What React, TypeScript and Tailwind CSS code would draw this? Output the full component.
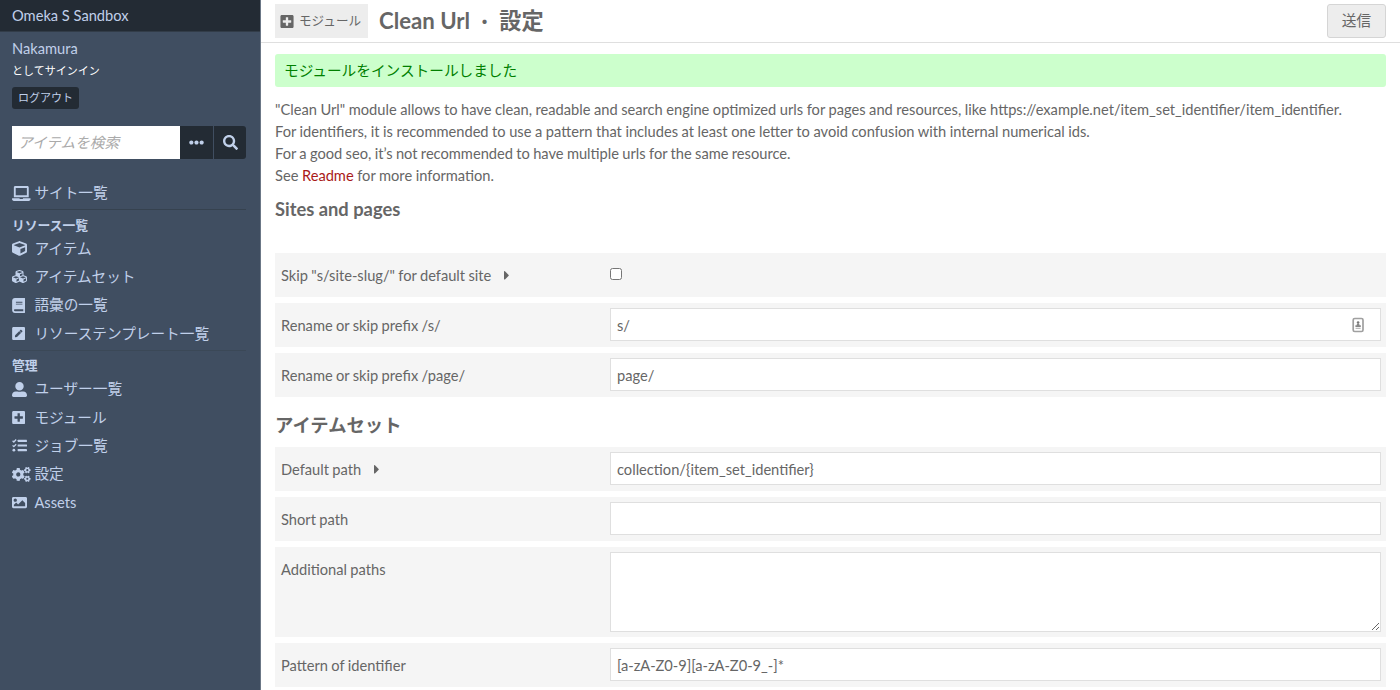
import React from 'react';
import {
  FaBook,
  FaCaretRight,
  FaCogs,
  FaCube,
  FaCubes,
  FaEllipsisH,
  FaImage,
  FaLaptop,
  FaPenSquare,
  FaPlusSquare,
  FaSearch,
  FaUserAlt,
} from 'react-icons/fa';

type NavItem = { label: string; icon: React.ComponentType<{ className?: string }>; size: string };

// checklist with heavier bars than the stock icon
const TasksIcon: React.FC<{ className?: string }> = ({ className }) => (
  <svg className={className} viewBox="0 0 512 512" fill="currentColor">
    <rect x="192" y="60" width="320" height="76" rx="16" />
    <rect x="192" y="218" width="320" height="76" rx="16" />
    <rect x="192" y="376" width="320" height="76" rx="16" />
    <circle cx="64" cy="416" r="48" />
    <path
      d="M20 92l42 42 80-82M20 252l42 42 80-82"
      fill="none"
      stroke="currentColor"
      strokeWidth="46"
      strokeLinejoin="round"
    />
  </svg>
);

const resourceLinks: NavItem[] = [
  { label: 'アイテム', icon: FaCube, size: 'w-[15px]' },
  { label: 'アイテムセット', icon: FaCubes, size: 'w-[15px]' },
  { label: '語彙の一覧', icon: FaBook, size: 'w-[13.4px]' },
  { label: 'リソーステンプレート一覧', icon: FaPenSquare, size: 'w-[13.4px]' },
];

const adminLinks: NavItem[] = [
  { label: 'ユーザー一覧', icon: FaUserAlt, size: 'w-[15px]' },
  { label: 'モジュール', icon: FaPlusSquare, size: 'w-[13.4px]' },
  { label: 'ジョブ一覧', icon: TasksIcon, size: 'w-[15px]' },
  { label: '設定', icon: FaCogs, size: 'w-[18.6px]' },
  { label: 'Assets', icon: FaImage, size: 'w-[15px]' },
];

const NavLink: React.FC<{ item: NavItem }> = ({ item }) => {
  const Icon = item.icon;
  return (
    <li>
      <a href="#" className="flex h-[28.4px] items-center whitespace-nowrap">
        <span className="w-[22.4px] shrink-0">
          <Icon className={`h-[15px] ${item.size}`} />
        </span>
        {item.label}
      </a>
    </li>
  );
};

const Sidebar: React.FC = () => (
  <aside className="w-[261px] shrink-0 border-r border-[#6b7786] bg-[#404e61] text-[#c0d0ea]">
    <div className="h-8 border-b border-[#323c48] bg-[#232b34] pl-3 leading-8">Omeka S Sandbox</div>
    <div className="pt-[6px] pr-[14px] pl-3">
      <div className="leading-[22px]">Nakamura</div>
      <div className="text-[11px] leading-[22px] text-white">としてサインイン</div>
      <button className="mt-[5px] block h-[22px] w-[67px] rounded-[3px] bg-[#232b34] text-[11px] leading-[22px]">
        ログアウト
      </button>
      <form className="mt-[17px] flex h-[33px]">
        <input
          placeholder="アイテムを検索"
          className="w-[168px] bg-white px-[6px] outline-none placeholder:text-[#aaa] placeholder:italic"
        />
        <button type="button" className="flex w-[33px] items-center justify-center bg-[#232b34]">
          <FaEllipsisH className="text-[15px]" />
        </button>
        <button
          type="button"
          className="flex w-[33px] items-center justify-center rounded-r-[3px] border-l border-[#404e61] bg-[#232b34]"
        >
          <FaSearch className="text-[15px]" />
        </button>
      </form>
      <ul className="mt-5 border-b border-[#36424f] pb-[2px]">
        <NavLink item={{ label: 'サイト一覧', icon: FaLaptop, size: 'w-[18.6px]' }} />
      </ul>
      <h4 className="mt-1 h-5 text-[12.8px] leading-[22px] font-bold">リソース一覧</h4>
      <ul className="border-b border-[#3b4857] pb-[2px]">
        {resourceLinks.map((item) => (
          <NavLink key={item.label} item={item} />
        ))}
      </ul>
      <h4 className="mt-[3px] h-[21px] text-[12.8px] leading-[22px] font-bold">管理</h4>
      <ul>
        {adminLinks.map((item) => (
          <NavLink key={item.label} item={item} />
        ))}
      </ul>
    </div>
  </aside>
);

const inputClass = 'h-[33px] w-full border border-[#dfdfdf] bg-white px-[6px] pt-px outline-none';

type FieldProps = { label: string; help?: boolean; children: React.ReactNode };

const Field: React.FC<FieldProps> = ({ label, help, children }) => (
  <div className="mb-[6px] flex bg-[#f5f5f5] p-[5px] pb-[6px] pl-[6px]">
    <div className="flex h-[33px] w-[329px] shrink-0 items-center pt-[2px] [word-spacing:-0.4px]">
      {label}
      {help && <FaCaretRight className="ml-[13px] h-[14.67px] w-[5.5px]" />}
    </div>
    <div className="relative min-w-0 flex-1">{children}</div>
  </div>
);

const App: React.FC = () => {
  return (
    <div className="flex h-[690px] overflow-hidden bg-white font-[Lato,'Noto_Sans_CJK_JP',sans-serif] text-[14.67px] text-[#666]">
      <Sidebar />
      <main className="min-w-0 flex-1">
        <header className="flex h-[43px] border-b border-[#dfdfdf] pt-1 pr-[14px] pl-[14px]">
          <div className="flex h-[34px] w-[93px] items-center bg-[#ededed] pl-[5px] text-[12.6px]">
            <FaPlusSquare className="mr-[5px] h-[15px] w-[14px]" />
            モジュール
          </div>
          <h1 className="ml-[11px] text-[22.2px] leading-[34px] font-bold whitespace-pre">
            Clean Url<span className="px-[11.5px]">·</span>設定
          </h1>
          <button className="ml-auto h-[34px] w-[59px] rounded-[3px] border border-[#d5d5d5] bg-[#ededed]">
            送信
          </button>
        </header>
        <div className="px-[14px] pt-[11px]">
          <div className="h-[33px] rounded-[3px] bg-[#cfc] pl-[9px] leading-[33px] text-[#008000]">
            モジュールをインストールしました
          </div>
          <p className="mt-3 leading-[22px] whitespace-nowrap [word-spacing:-0.21px]">
            "Clean Url" module allows to have clean, readable and search engine optimized urls for pages and
            resources, like https://example.net/item_set_identifier/item_identifier.
            <br />
            For identifiers, it is recommended to use a pattern that includes at least one letter to avoid
            confusion with internal numerical ids.
            <br />
            <span className="[word-spacing:-0.42px]">
              For a good seo, it’s not recommended to have multiple urls for the same resource.
            </span>
            <br />
            See{' '}
            <a href="#" className="text-[#a91919]">
              Readme
            </a>{' '}
            for more information.
          </p>
          <h3 className="mt-[11px] h-[55px] text-[18.33px] leading-[22px] font-bold">Sites and pages</h3>
          <Field label={'Skip "s/site-slug/" for default site'} help>
            <input
              type="checkbox"
              className="mt-[10px] block size-3 appearance-none rounded-[2.5px] border border-[#767676] bg-white"
            />
          </Field>
          <Field label="Rename or skip prefix /s/">
            <input className={inputClass} defaultValue="s/" />
            <svg className="absolute top-[9px] right-[16px]" width="13" height="16" viewBox="0 0 13 16">
              <rect x="1.2" y="1.5" width="9.8" height="13" rx="1.5" fill="#fff" stroke="#a0a0a0" strokeWidth="1.7" />
              <circle cx="6.1" cy="5.6" r="1.3" fill="#777" />
              <path d="M4.8 7h2.6v1.3h1.4v1.6H3.4V8.3h1.4z" fill="#888" />
              <path d="M3.6 11.3h5" stroke="#aaa" />
            </svg>
          </Field>
          <Field label="Rename or skip prefix /page/">
            <input className={inputClass} defaultValue="page/" />
          </Field>
          <h3 className="mt-[17px] mb-[11px] h-[22px] text-[18.33px] leading-[22px] font-bold">アイテムセット</h3>
          <Field label="Default path" help>
            <input className={inputClass} defaultValue="collection/{item_set_identifier}" />
          </Field>
          <Field label="Short path">
            <input className={inputClass} />
          </Field>
          <Field label="Additional paths">
            <textarea className="-mb-px block h-[80px] w-full resize-y border border-[#dfdfdf] bg-white outline-none" />
          </Field>
          <Field label="Pattern of identifier">
            <input className={inputClass} defaultValue="[a-zA-Z0-9][a-zA-Z0-9_-]*" />
          </Field>
        </div>
      </main>
    </div>
  );
};

export default App;
